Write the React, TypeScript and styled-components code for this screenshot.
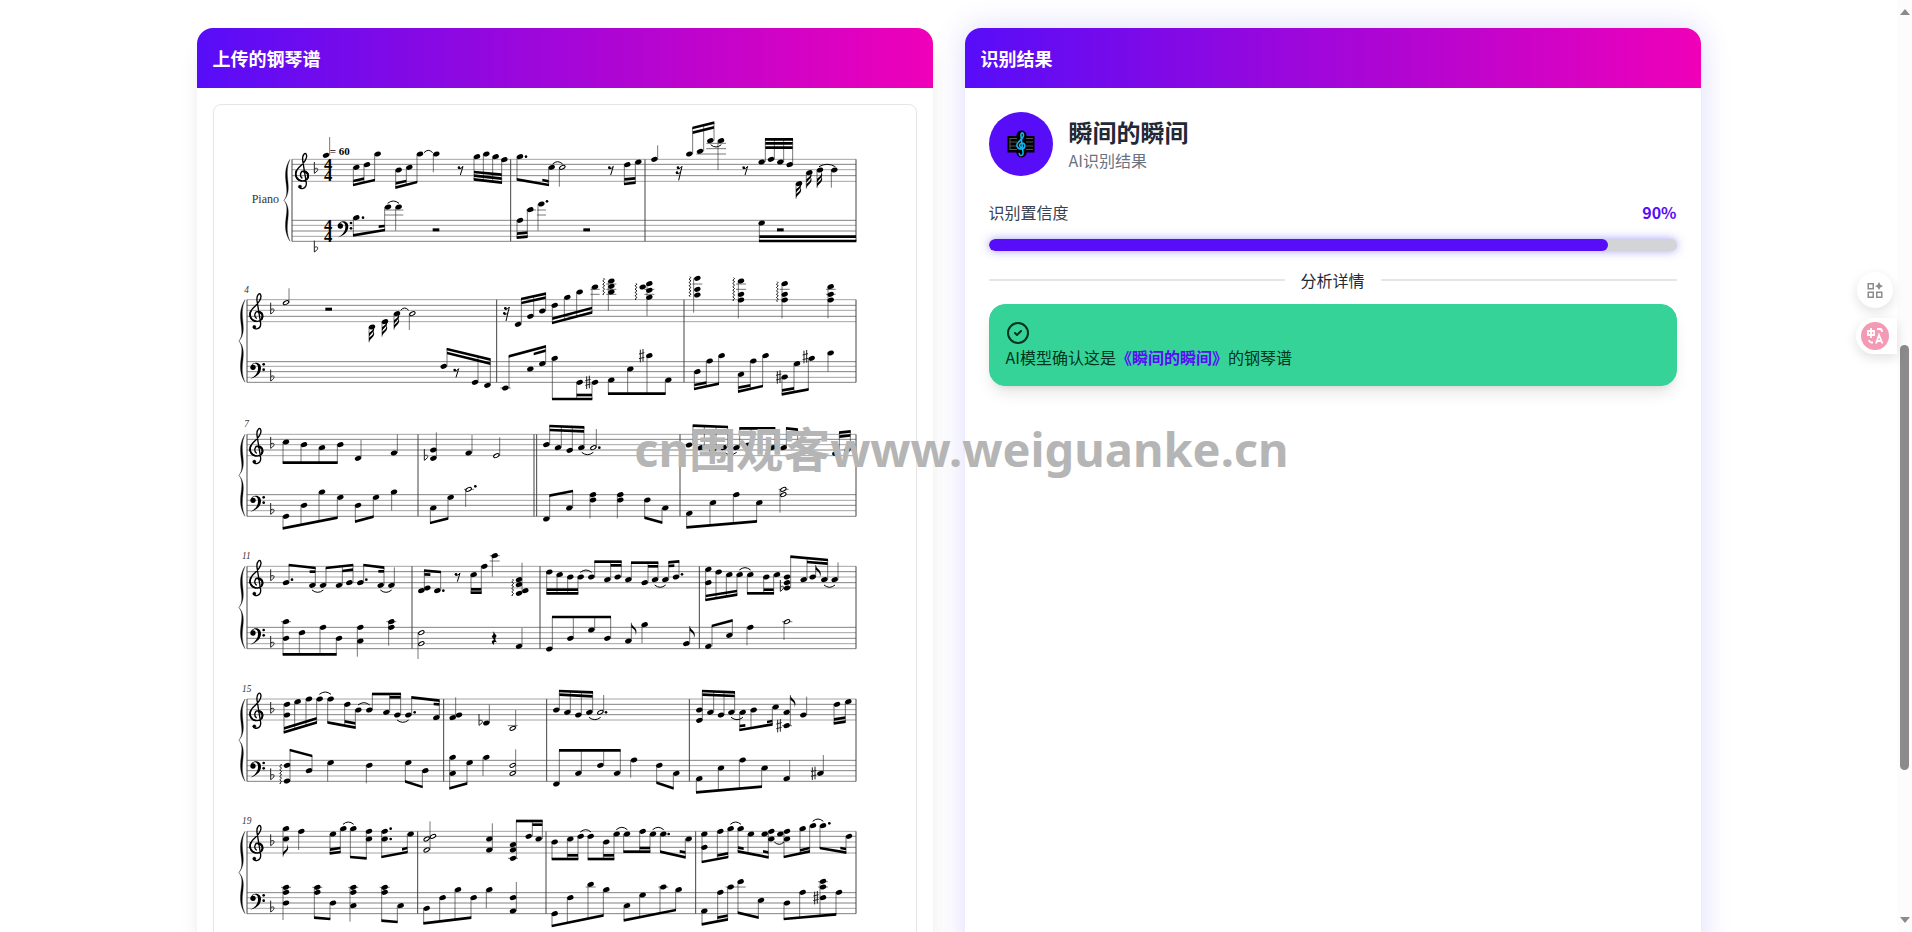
import React from 'react';
import styled, { createGlobalStyle } from 'styled-components';
import { CircleCheck } from 'lucide-react';

/* ---------- score data ---------- */

interface Group {
  stems: string; // "x,headY x,headY ..."
  from: number;
  to: number;
}

interface System {
  offset: number;
  left: number;
  number: string;
  numberY: number;
  treble: number[];
  bass: number[];
  barlines: number[];
  heads: string;
  halves: string;
  stems: string; // "x,y1,y2"
  groups: Group[];
  beams: string; // "x1,y1,x2,y2"
  dots: string;
  ties: string; // "x1,x2,y,direction"
  eighthRests?: string;
  sixteenthRests?: string;
  halfRests?: string;
  quarterRests?: string;
  sharps?: string;
  flats?: string;
  arpeggios?: string; // "x,y1,y2"
  flags?: string; // "x,y,direction"
  ledgers?: string; // "x1,x2,y"
}

const g = (stems: string, from: number, to: number): Group => ({ stems, from, to });

const SYSTEMS: System[] = [
  {
    offset: -285,
    left: 215,
    number: '',
    numberY: 0,
    treble: [448, 463, 479, 497, 514],
    bass: [631, 646, 663, 679, 694],
    barlines: [871, 1274],
    heads:
      '317,436 408,472 440,464 472,432 535,480 567,472 599,432 648,432 770,440 798,432 826,440 852,449 899,440 994,472 1221,464 1254,456 1302,448 1407,432 1439,424 1470,392 1502,392 1624,456 1652,448 1680,456 1708,464 1736,521 1767,488 1799,480 1842,480 408,623 503,591 535,591 899,631 930,599 963,582 1624,639',
    halves: '1026,472',
    stems:
      '328,381,436 639,432,487 1017,472,530 1312,406,448 1493,392,480 1727,521,566 1758,488,536 1790,480,534 1833,480,533 526,591,662 953,582,662',
    groups: [
      g('399,472 431,464 463,432', 525, 510),
      g('526,480 558,472 590,432', 533, 516),
      g('761,440 789,432 817,440 844,449', 508, 518),
      g('890,440 985,472', 508, 525),
      g('1212,464 1245,456', 522, 518),
      g('1417,432 1450,424 1481,392', 354, 338),
      g('1635,456 1662,448 1690,456 1717,464', 388, 388),
      g('399,623 493,591', 676, 660),
      g('890,631 921,599', 683, 680),
      g('1617,639 1907,693', 693, 693),
    ],
    beams:
      '399,513,431,506 526,520,558,513 761,497,844,506 761,486,844,494 966,510,985,514 1212,508,1245,505 1417,368,1481,352 1635,400,1717,400 1635,413,1717,413 475,650,493,648 890,671,921,668 1617,680,1907,680',
    dots: '428,623 917,440 980,574',
    ties: '612,636,428,-1 998,1026,462,-1 503,535,580,-1 1472,1502,404,1 1797,1844,470,-1',
    eighthRests: '720,480 1171,480 1574,480',
    sixteenthRests: '1375,488',
    halfRests: '647,659 1099,659 1680,659',
    flags: '1727,566,-1 1727,552,-1 1758,536,-1 1758,522,-1 1790,534,-1 1790,520,-1',
    ledgers: '493,549,600 493,549,615 1458,1517,400 1458,1517,416 1428,1517,432 918,947,600 950,977,600 950,977,615',
  },
  {
    offset: 480,
    left: 80,
    number: '4',
    numberY: 84,
    treble: [104, 121, 136, 154, 170],
    bass: [290, 304, 320, 337, 352],
    barlines: [829, 1391],
    heads:
      '455,186 494,170 530,146 893,178 930,154 966,138 1003,121 1041,97 1078,81 1124,66 1173,48 1173,64 1173,81 1267,66 1287,56 1287,76 1287,97 1431,40 1431,73 1431,90 1562,48 1562,88 1562,105 1693,56 1693,88 1693,105 1831,65 1831,88 1831,105 670,304 764,352 801,361 855,369 930,312 966,296 1003,280 1078,352 1124,352 1173,345 1230,312 1287,272 1344,345 1431,320 1468,288 1504,272 1562,328 1599,288 1636,272 1693,336 1730,296 1774,280 1831,264',
    halves: '197,113 576,146',
    stems:
      '206,70,113 446,186,232 485,170,215 521,146,194 567,146,195 1164,48,137 1280,56,153 1420,40,143 1554,48,160 1685,56,160 1823,65,160 1823,264,320',
    groups: [
      g('903,178 940,154 976,138', 102, 86),
      g('996,121 1032,97 1069,81 1115,66', 174, 142),
      g('680,304 773,352 810,361', 252, 284),
      g('866,369 976,296', 274, 244),
      g('996,280 1069,352 1115,352', 402, 402),
      g('1164,345 1222,312 1280,272 1335,345', 386, 386),
      g('1422,320 1458,288 1495,272', 372, 356),
      g('1554,328 1590,288 1627,272', 380, 363),
      g('1685,336 1721,296 1764,280', 388, 373),
    ],
    beams:
      '903,114,976,98 996,161,1115,129 680,264,810,296 940,267,976,257 1069,390,1115,390 1422,360,1458,353 1554,368,1590,361 1685,376,1721,370',
    dots: '',
    ties: '542,564,136,-1',
    eighthRests: '707,322',
    sixteenthRests: '857,145',
    halfRests: '325,132',
    sharps: '1264,272 1103,352 1675,336 1755,275',
    arpeggios: '1150,40,88 1247,55,105 1409,35,97 1540,38,112 1671,50,112',
    flags: '446,232,-1 446,218,-1 485,215,-1 485,201,-1 521,194,-1 521,180,-1',
    ledgers:
      '1110,1138,73 1110,1138,88 1158,1188,57 1158,1188,73 1158,1188,88 1272,1302,73 1272,1302,88 1416,1446,57 1547,1577,57 1547,1577,73 1678,1708,73 1817,1846,73 1817,1846,88 840,871,369',
  },
  {
    offset: 480,
    left: 80,
    number: '7',
    numberY: 485,
    treble: [508, 523, 539, 555, 572],
    bass: [689, 706, 721, 737, 754],
    barlines: [593, 941, 949, 1379],
    heads:
      '197,531 251,539 305,548 360,539 413,580 521,564 639,555 639,580 745,564 978,539 1013,548 1048,556 1083,548 1406,540 1441,548 1477,556 1510,548 1548,548 1582,540 1656,548 1690,548 1845,565 1881,555 197,754 251,721 305,681 360,697 413,721 467,697 521,681 639,729 691,697 978,762 1047,729 1118,689 1118,705 1200,689 1200,705 1281,705 1335,729 1407,745 1478,713 1548,689 1617,713',
    halves: '828,572 1119,548 745,673 1689,673 1689,689',
    stems:
      '422,525,580 531,508,564 648,502,580 755,510,564 838,517,572 1128,492,548 514,681,737 736,673,726 1109,689,760 1191,689,760 1679,673,743',
    groups: [
      g('188,531 242,539 296,548 351,539', 593, 593),
      g('988,539 1023,548 1056,556 1091,548', 483, 487),
      g('1418,540 1452,548 1487,556 1522,548', 482, 486),
      g('1558,548 1592,540 1664,548', 490, 490),
      g('1698,548 1732,548', 490, 494),
      g('1857,565 1890,555', 503, 499),
      g('188,754 242,721 296,681 351,697', 790, 758),
      g('405,721 459,697', 770, 755),
      g('630,729 683,697', 774, 760),
      g('988,762 1057,729', 692, 678),
      g('1273,705 1325,729', 758, 773),
      g('1399,745 1469,713 1539,689 1609,713', 787, 769),
    ],
    beams: '988,495,1091,499 1857,515,1890,511',
    dots: '765,664 1137,548',
    ties: '1085,1118,562,1 1512,1548,562,1',
    flats: '612,568',
    ledgers: '731,761,673 1675,1705,673',
  },
  {
    offset: 1305,
    left: 80,
    number: '11',
    numberY: 57,
    treble: [79, 95, 111, 128, 144],
    bass: [262, 278, 295, 311, 326],
    barlines: [575, 959, 1437],
    heads:
      '197,128 276,136 308,136 356,136 387,128 420,128 481,136 513,136 603,152 621,144 651,152 760,104 792,79 823,47 896,119 896,134 896,160 915,152 987,96 1018,104 1050,111 1081,111 1113,111 1161,119 1192,111 1224,119 1273,128 1304,119 1335,119 1367,111 1464,88 1464,128 1495,96 1527,104 1558,104 1590,104 1638,111 1670,104 1700,111 1700,128 1700,144 1750,119 1777,111 1812,119 1843,119 197,245 197,295 245,278 308,262 356,295 420,262 420,303 513,245 513,262 896,319 987,327 1050,295 1113,270 1161,295 1224,303 1273,254 1398,311 1464,319 1527,286 1590,262',
    halves: '603,278 603,311 1700,245',
    stems:
      '522,82,136 816,47,110 905,68,160 1786,75,111 1853,67,119 411,262,350 505,245,317 593,278,357 905,264,319 1233,248,303 1265,254,310 1408,258,311 1580,262,316 1691,245,300',
    groups: [
      g('206,128 285,136', 75, 84),
      g('317,136 366,136 398,128', 84, 75),
      g('430,128 491,136', 75, 83),
      g('612,152 661,152', 92, 96),
      g('752,104 783,79', 158, 158),
      g('979,96 1010,104 1042,111 1073,111', 160, 160),
      g('1123,111 1171,119 1203,111', 65, 65),
      g('1233,119 1283,128 1313,119', 68, 68),
      g('1345,119 1376,111', 67, 64),
      g('1456,88 1487,96 1518,104 1550,104', 180, 164),
      g('1581,104 1630,111 1660,104', 160, 160),
      g('1711,144 1760,119 1822,119', 50, 60),
      g('188,245 237,278 299,262 348,295', 343, 343),
      g('996,327 1059,295 1123,270 1171,295', 231, 231),
      g('1475,319 1536,286', 258, 241),
    ],
    beams:
      '268,95,285,95 366,93,398,89 474,94,491,94 612,103,630,104 752,148,783,148 979,149,1073,149 1171,76,1203,76 1283,79,1313,79 1345,78,1362,77 1456,168,1550,153 1630,149,1660,149 1760,66,1822,71',
    dots: '215,119 438,119 669,152 1385,103',
    ties: '276,308,150,1 481,513,150,1 1081,1113,97,-1 1304,1335,135,1 1558,1590,90,-1 1812,1843,135,1',
    eighthRests: '711,110',
    quarterRests: '822,294',
    flats: '1680,136',
    arpeggios: '877,118,165',
    flags: '1233,248,1 1408,258,1 1786,75,1',
    ledgers: '182,212,245 498,528,245 808,838,47 808,838,63 1685,1716,245',
  },
  {
    offset: 1305,
    left: 80,
    number: '15',
    numberY: 455,
    treble: [477, 493, 509, 524, 540],
    bass: [661, 677, 692, 708, 724],
    barlines: [670, 979, 1407],
    heads:
      '200,493 200,525 232,485 266,477 298,477 331,477 381,493 414,510 447,510 498,517 531,525 564,525 648,533 697,533 716,525 798,549 1008,510 1041,517 1074,525 1107,517 1437,510 1437,541 1470,517 1502,525 1533,517 1567,517 1600,510 1666,501 1699,517 1699,557 1749,525 1850,493 1884,485 200,676 200,723 266,692 331,668 447,676 564,668 615,692 697,652 697,700 748,668 798,652 1008,732 1074,700 1140,676 1190,700 1241,660 1317,676 1368,700 1437,716 1502,684 1567,660 1633,684 1699,716 1800,700',
    halves: '877,565 1140,517 877,676 877,700',
    stems:
      '706,472,533 807,494,549 886,510,565 1150,465,517 1710,465,557 1759,470,525 322,668,724 438,676,730 788,652,708 886,628,700 1231,660,713 1708,660,716 1809,645,700',
    groups: [
      g('191,493 223,485 257,477 289,477', 577, 547),
      g('322,477 373,493 405,510', 547, 563),
      g('456,510 508,517 541,525', 462, 462),
      g('574,525 657,533', 472, 482),
      g('1017,510 1050,517 1083,525 1117,517', 453, 457),
      g('1446,541 1480,517 1511,525 1543,517', 453, 457),
      g('1558,517 1592,510 1656,501', 570, 553),
      g('1841,493 1875,485', 550, 545),
      g('209,723 275,692', 630, 648),
      g('555,668 606,692', 724, 741),
      g('688,652 740,668', 745, 730),
      g('1017,732 1083,700 1150,676 1200,700', 631, 631),
      g('1309,676 1359,700', 728, 745),
      g('1428,716 1494,684 1557,660 1624,684', 757, 740),
    ],
    beams:
      '191,565,289,535 373,544,405,550 508,472,541,472 640,492,657,493 1017,464,1117,469 1446,464,1543,468 1558,558,1575,556 1640,546,1656,543 1841,538,1875,533',
    dots: '583,517 1157,517',
    ties: '298,331,463,-1 414,447,495,-1 531,564,540,1 1107,1140,532,1 1533,1567,532,1',
    sharps: '1676,557 1780,700',
    flats: '776,538',
    arpeggios: '181,672,730',
    flags: '1710,465,1',
    ledgers: '1685,1715,557 862,892,557',
  },
  {
    offset: 2055,
    left: 80,
    number: '19',
    numberY: 102,
    treble: [124, 139, 156, 172, 189],
    bass: [308, 323, 339, 355, 371],
    barlines: [592, 977, 1426],
    heads:
      '197,116 197,147 243,124 338,132 369,116 399,116 446,124 446,147 493,124 493,147 571,132 807,147 807,180 878,164 878,180 878,205 925,139 955,147 1003,156 1050,147 1081,139 1111,139 1158,156 1189,132 1220,132 1267,124 1298,132 1329,132 1405,147 1452,132 1452,172 1500,124 1531,116 1561,116 1592,132 1633,132 1653,124 1653,147 1680,132 1700,124 1700,147 1747,116 1778,107 1808,107 1886,139 197,292 197,307 197,339 291,292 291,307 338,339 399,292 399,307 399,347 493,292 493,307 541,347 619,355 667,323 713,299 760,323 807,299 878,323 878,363 1003,371 1050,323 1111,283 1158,299 1220,347 1267,315 1329,291 1375,299 1452,363 1500,307 1531,291 1561,275 1622,331 1700,339 1747,307 1808,274 1808,291 1808,323 1856,307',
    halves: '619,147 619,180 638,139',
    stems:
      '188,116,200 235,124,180 629,94,180 816,100,180 188,292,390 389,292,395 798,299,355 888,276,363',
    groups: [
      g('329,132 360,116', 190, 186),
      g('390,116 438,124', 201, 205),
      g('484,124 561,132', 201, 186),
      g('888,205 936,139 966,147', 93, 93),
      g('995,156 1041,147 1073,139', 207, 207),
      g('1103,139 1149,156 1181,132', 207, 207),
      g('1210,132 1258,124 1289,132', 185, 185),
      g('1320,132 1395,147', 185, 202),
      g('1445,132 1491,124 1523,116', 216, 201),
      g('1553,116 1583,132 1644,124', 184, 202),
      g('1691,124 1739,116 1768,107', 201, 184),
      g('1799,107 1877,139', 174, 188),
      g('282,292 329,339', 383, 387),
      g('484,292 531,347', 392, 396),
      g('610,355 658,323 704,299 752,323', 400, 383),
      g('995,371 1041,323 1103,283 1149,299', 408, 376),
      g('1211,347 1258,315 1319,291 1366,299', 391, 360),
      g('1445,363 1492,307 1522,291', 403, 388),
      g('1553,275 1614,331', 368, 383),
      g('1691,339 1738,307 1799,274 1847,307', 387, 373),
    ],
    beams:
      '329,179,360,174 545,178,561,174 936,104,966,104 1041,196,1073,196 1149,196,1181,196 1258,174,1289,174 1378,184,1395,187 1491,196,1523,190 1553,173,1570,176 1628,184,1644,187 1739,181,1768,174 1860,174,1877,177 1491,383,1522,377',
    dots: '511,116 511,147 1345,132 1827,100',
    ties: '369,399,103,-1 1081,1111,126,-1 1189,1220,119,-1 1298,1329,119,-1 1531,1561,103,-1 1778,1808,94,-1 1663,1690,156,1',
    sharps: '1787,323',
    flags: '188,200,-1',
    ledgers: '182,212,292 276,306,292 384,414,292 478,508,292 863,893,205 1096,1126,291 1314,1344,291 1516,1546,291 1546,1576,291 1793,1823,275 1793,1823,291',
  },
];

const parse = (list = ''): number[][] =>
  list.trim() === '' ? [] : list.trim().split(/\s+/).map((item) => item.split(',').map(Number));

const TrebleClef = ({ x, y }: { x: number; y: number }) => (
  <g transform={`translate(${x} ${y})`} fill="none" stroke="#000">
    <path strokeWidth="4" d="M21 76C12 70 14 54 26 54C44 55 44 82 23 84C1 84 -5 63 7 48C17 36 34 26 34 9C32 -7 20 4 22 22L33 90C34 108 14 111 11 101" />
    <path strokeWidth="5" d="M4 52C-3 66 4 82 20 84" />
    <path strokeWidth="6" d="M24 56C38 56 42 68 35 78" />
    <circle cx="14" cy="101" r="5" fill="#000" />
  </g>
);

const BassClef = ({ x, y }: { x: number; y: number }) => (
  <g transform={`translate(${x} ${y})`}>
    <path d="M4 12C7 -1 33 -3 34 17C34 35 20 45 2 51C18 41 26 32 25 16C24 2 11 2 8 9Z" />
    <circle cx="10" cy="16" r="8" />
    <circle cx="42" cy="7" r="4" />
    <circle cx="42" cy="23" r="4" />
  </g>
);

const Flat = ({ x, y }: { x: number; y: number }) => (
  <path fill="none" stroke="#222" strokeWidth="3" transform={`translate(${x} ${y})`} d="M0 -20V14C14 6 13 -5 1 0" />
);

const SystemDrawing = ({ s }: { s: System }) => {
  const top = s.treble[0];
  const bottom = s.bass[4];
  const mid = (top + bottom) / 2;
  const first = s.number === '';
  const clefX = s.left + (first ? 10 : 8);
  const flatX = s.left + (first ? 67 : 71);
  const braceX = s.left - 6;
  return (
    <g transform={`translate(0 ${s.offset})`}>
      {[...s.treble, ...s.bass].map((y, i) => (
        <path key={y} d={`M${s.left} ${y}H1907`} stroke={i % 2 ? '#444' : '#777'} strokeWidth="2" />
      ))}
      {[s.left, ...s.barlines, 1907].map((x) => (
        <path key={x} d={`M${x} ${top}V${bottom}`} stroke="#444" strokeWidth="3" />
      ))}
      <path
        d={`M${braceX} ${top}C${braceX - 32} ${top + 50} ${braceX + 6} ${mid - 30} ${braceX - 18} ${mid}C${braceX + 6} ${mid + 30} ${braceX - 32} ${bottom - 50} ${braceX} ${bottom}C${braceX - 22} ${bottom - 50} ${braceX + 12} ${mid + 34} ${braceX - 18} ${mid}C${braceX + 12} ${mid - 34} ${braceX - 22} ${top + 50} ${braceX} ${top}Z`}
        stroke="#222"
        strokeWidth="1"
      />
      <TrebleClef x={clefX} y={top - 19} />
      <BassClef x={first ? 350 : clefX} y={s.bass[0] + 1} />
      <Flat x={flatX} y={s.treble[2] - 3} />
      <Flat x={flatX} y={first ? 712 : s.bass[3] - 3} />
      {first ? (
        <>
          <text x="94" y="580" fontSize="36" fill="#333">Piano</text>
          <text x="328" y="434" fontSize="33" fontWeight="700">= 60</text>
          {[480, 662].map((y) => (
            <text key={y} x="311" y={y} fontSize="50" fontWeight="700">
              <tspan>4</tspan>
              <tspan x="311" dy="33">4</tspan>
            </text>
          ))}
        </>
      ) : (
        <text x={s.number.length > 1 ? 65 : 72} y={s.numberY} fontSize="28" fontStyle="italic" fill="#333">{s.number}</text>
      )}
      {parse(s.ledgers).map(([a, b, y], i) => (
        <path key={i} d={`M${a} ${y}H${b}`} stroke="#333" strokeWidth="2" />
      ))}
      {parse(s.stems).map(([x, a, b], i) => (
        <path key={i} d={`M${x} ${a}V${b}`} stroke="#333" strokeWidth="2" />
      ))}
      {s.groups.map((group, i) => {
        const stems = parse(group.stems);
        const x1 = stems[0][0];
        const x2 = stems[stems.length - 1][0];
        return (
          <g key={i}>
            {stems.map(([x, y]) => (
              <path
                key={x}
                d={`M${x} ${y}V${group.from + ((group.to - group.from) * (x - x1)) / (x2 - x1)}`}
                stroke="#333"
                strokeWidth="2"
              />
            ))}
            <path d={`M${x1 - 1} ${group.from - 4}L${x2 + 1} ${group.to - 4}V${group.to + 4}L${x1 - 1} ${group.from + 4}Z`} />
          </g>
        );
      })}
      {parse(s.beams).map(([x1, y1, x2, y2], i) => (
        <path key={i} d={`M${x1} ${y1 - 4}L${x2} ${y2 - 4}V${y2 + 4}L${x1} ${y1 + 4}Z`} />
      ))}
      {parse(s.heads).map(([x, y], i) => (
        <ellipse key={i} rx="10" ry="7" transform={`translate(${x} ${y}) rotate(-22)`} />
      ))}
      {parse(s.halves).map(([x, y], i) => (
        <ellipse key={i} rx="9" ry="5" fill="#fff" stroke="#000" strokeWidth="3" transform={`translate(${x} ${y}) rotate(-28)`} />
      ))}
      {parse(s.dots).map(([x, y], i) => (
        <circle key={i} cx={x} cy={y} r="4" />
      ))}
      {parse(s.ties).map(([a, b, y, d], i) => (
        <path key={i} fill="none" stroke="#000" strokeWidth="3" d={`M${a - 1} ${y}Q${(a + b) / 2} ${y + 14 * d} ${b + 1} ${y}`} />
      ))}
      {parse(s.eighthRests).map(([x, y], i) => (
        <g key={i} transform={`translate(${x} ${y})`}>
          <circle cx="-4" cy="-7" r="4" />
          <path fill="none" stroke="#000" strokeWidth="3" d="M-5 -4Q2 -2 8 -11L0 15" />
        </g>
      ))}
      {parse(s.sixteenthRests).map(([x, y], i) => (
        <g key={i} transform={`translate(${x} ${y})`}>
          <circle cx="-2" cy="-15" r="4" />
          <circle cx="-5" cy="0" r="4" />
          <path fill="none" stroke="#000" strokeWidth="3" d="M-3 -12Q4 -10 10 -19L0 23M-6 3Q1 5 6 -2" />
        </g>
      ))}
      {parse(s.halfRests).map(([x, y], i) => (
        <rect key={i} x={x - 10} y={y - 4} width="20" height="9" />
      ))}
      {parse(s.quarterRests).map(([x, y], i) => (
        <path key={i} transform={`translate(${x} ${y})`} d="M-5 -22L7 -6Q-2 3 8 13Q-5 8 0 22Q-15 10 -1 6L-8 -5Q1 -12 -5 -22Z" />
      ))}
      {parse(s.sharps).map(([x, y], i) => (
        <path key={i} fill="none" stroke="#222" strokeWidth="3" transform={`translate(${x} ${y})`} d="M-4 -18V20M4 -20V18M-8 -5L8 -9M-8 9L8 5" />
      ))}
      {parse(s.flats).map(([x, y], i) => (
        <Flat key={i} x={x} y={y + 4} />
      ))}
      {parse(s.arpeggios).map(([x, a, b], i) => (
        <path
          key={i}
          fill="none"
          stroke="#000"
          strokeWidth="3"
          d={`M${x} ${a}${'q5 3 0 5t0 5'.repeat(Math.round((b - a) / 10))}`}
        />
      ))}
      {parse(s.flags).map(([x, y, d], i) => (
        <path key={i} transform={`translate(${x} ${y}) scale(1 ${d})`} d="M0 0C2 14 24 16 12 38C16 24 8 20 0 14Z" />
      ))}
    </g>
  );
};

const SheetMusic = () => (
  <Sheet viewBox="-19 0 2106 2979" role="img" aria-label="钢琴谱">
    {SYSTEMS.map((s) => (
      <SystemDrawing key={`${s.offset}-${s.number}`} s={s} />
    ))}
  </Sheet>
);

/* ---------- styles ---------- */

const GlobalStyle = createGlobalStyle`
  * { box-sizing: border-box; }
  body {
    margin: 0;
    background: #fff;
    color: #1f2937;
    font: 16px/24px "Noto Sans CJK SC", "Noto Sans", sans-serif;
  }
  h1, h2, p { margin: 0; }
`;

const Viewport = styled.div`
  position: relative;
  display: flex;
  height: 100vh;
  overflow: hidden;
`;

const Main = styled.main`
  flex: 1;
  min-width: 0;
  padding: 28px 16px;
  overflow: hidden;
`;

const Columns = styled.div`
  display: grid;
  grid-template-columns: 1fr 1fr;
  gap: 32px;
  max-width: 1504px;
  margin: 0 auto;
`;

const Card = styled.section<{ $glow?: boolean }>`
  border-radius: 16px;
  background: #fff;
  box-shadow: ${(p) =>
    p.$glow
      ? '0 0 30px rgba(79, 70, 229, 0.2)'
      : '0 20px 25px -5px rgba(0, 0, 0, 0.1), 0 8px 10px -6px rgba(0, 0, 0, 0.1)'};
`;

const CardHeader = styled.header`
  padding: 16px;
  border-radius: 16px 16px 0 0;
  background: linear-gradient(90deg, #570df8, #f000b8);
`;

const CardTitle = styled.h2`
  color: #fff;
  font-size: 18px;
  line-height: 28px;
  font-weight: 700;
`;

const SheetBody = styled.div`
  padding: 16px;
`;

const SheetFrame = styled.div`
  overflow: hidden;
  border: 1px solid #e5e6e6;
  border-radius: 8px;
`;

const Sheet = styled.svg`
  display: block;
  width: 100%;
  font-family: "Liberation Serif", serif;
`;

const ResultBody = styled.div`
  padding: 24px;
`;

const Song = styled.div`
  display: flex;
  align-items: center;
  gap: 16px;
  margin-bottom: 24px;
`;

const Avatar = styled.div`
  display: grid;
  place-items: center;
  width: 64px;
  height: 64px;
  border-radius: 50%;
  background: #570df8;
`;

const SongName = styled.h1`
  font-size: 24px;
  line-height: 32px;
  font-weight: 700;
`;

const SongNote = styled.p`
  color: #6b7280;
`;

const ConfidenceRow = styled.div`
  display: flex;
  justify-content: space-between;
  margin-bottom: 15px;
  color: #374151;
`;

const Percent = styled.strong`
  color: #570df8;
  font-weight: 700;
`;

const Progress = styled.progress`
  display: block;
  width: 100%;
  height: 12px;
  border: 0;
  border-radius: 8px;
  overflow: hidden;
  appearance: none;
  background: #d2d4d7;
  box-shadow: 0 0 10px rgba(79, 70, 229, 0.5);

  &::-webkit-progress-bar {
    background: #d2d4d7;
    border-radius: 8px;
  }
  &::-webkit-progress-value {
    background: #570df8;
    border-radius: 8px;
  }
`;

const Divider = styled.div`
  display: flex;
  align-items: center;
  gap: 16px;
  margin: 17px 0 12px;

  &::before,
  &::after {
    content: '';
    flex: 1;
    height: 2px;
    background: #e5e6e6;
  }
`;

const Alert = styled.div`
  padding: 16px;
  border: 1px solid #36d399;
  border-radius: 16px;
  background: #36d399;
  color: #003320;
  box-shadow: 0 10px 15px -3px rgba(0, 0, 0, 0.1), 0 4px 6px -4px rgba(0, 0, 0, 0.1);

  svg {
    display: block;
  }
`;

const Highlight = styled.strong`
  color: #570df8;
  font-weight: 700;
`;

const Watermark = styled.div`
  position: absolute;
  top: 417px;
  left: 0;
  right: 0;
  padding-left: 11px;
  color: #b5b5b5;
  font: 700 47px/64px "Noto Sans", "Noto Sans CJK SC", sans-serif;
  text-align: center;
  white-space: nowrap;
  pointer-events: none;
`;

const FloatingTools = styled.div`
  position: absolute;
  top: 272px;
  right: 15px;
  display: flex;
  flex-direction: column;
  align-items: flex-end;
  gap: 10px;
`;

const ToolButton = styled.button<{ $docked?: boolean }>`
  display: flex;
  align-items: center;
  justify-content: ${(p) => (p.$docked ? 'flex-start' : 'center')};
  width: ${(p) => (p.$docked ? 41 : 36)}px;
  height: 36px;
  margin-right: ${(p) => (p.$docked ? 0 : 4)}px;
  padding: 0 ${(p) => (p.$docked ? 5 : 0)}px;
  border: 0;
  border-radius: ${(p) => (p.$docked ? '18px 0 0 18px' : '18px')};
  background: #fff;
  box-shadow: 0 4px 12px rgba(0, 0, 0, 0.12);
`;

const ScrollTrack = styled.div`
  display: flex;
  flex-direction: column;
  align-items: center;
  width: 15px;
  padding: 6px 0;
  background: #fcfcfc;
`;

const ScrollSpace = styled.div<{ $grow: number }>`
  flex: ${(p) => p.$grow};
`;

const ScrollThumb = styled.div`
  flex: 427;
  width: 9px;
  border-radius: 5px;
  background: #8b8b8b;
`;

/* ---------- icons ---------- */

const ScoreIcon = () => (
  <svg width="28" height="28" viewBox="0 0 28 28" aria-hidden="true">
    <rect x="0.5" y="6" width="27" height="16.500" fill="#000" />
    <rect x="9.500" y="0.500" width="10" height="27" rx="5" fill="#000" />
    <path d="M2.500 8.500H26M2.500 12H26M2.500 16H26M2.500 19.500H26M3 8V20" stroke="#555" fill="none" />
    <rect x="10" y="5" width="9" height="18" rx="3" fill="#000" />
    <path
      d="M14 17.500C11.500 16 13 12.500 15.500 13C19 14 18.500 19 14.500 19C10 19 8.500 15 11.500 12C14 9.500 17 7.500 16.500 4.500C16 1.500 13.500 3 14 6L16 22.500C16.500 26 12.500 26.500 12.200 23.500"
      fill="none"
      stroke="#12b5ea"
      strokeWidth="1.600"
      strokeLinecap="round"
    />
  </svg>
);

const GridPlusIcon = () => (
  <svg width="16" height="16" viewBox="0 0 16 16" fill="none" stroke="#8c8c8c" strokeWidth="1.500" aria-hidden="true">
    <path d="M1.250 1.750H6.250V6.750H1.250ZM1.250 10.250H6.250V15.250H1.250ZM9.750 10.250H14.750V15.250H9.750Z" />
    <path fill="#8c8c8c" stroke="none" d="M12 0Q12.800 3.200 16 4Q12.800 4.800 12 8Q11.200 4.800 8 4Q11.200 3.200 12 0Z" />
  </svg>
);

const TranslateIcon = () => (
  <svg width="28" height="28" viewBox="0 0 28 28" aria-hidden="true">
    <circle cx="14" cy="14" r="14" fill="#f49ab4" />
    <path
      d="M7 9H13V13H7ZM10 6V16M16 7H19Q21 7 21 10M8 18Q8 20 10 20.500H12M15 21.500L18 13L21.500 21.500M16 19H20.500"
      fill="none"
      stroke="#fff"
      strokeWidth="1.800"
    />
  </svg>
);

const Arrow = ({ down }: { down?: boolean }) => (
  <svg width="10" height="12" viewBox="0 0 10 12" aria-hidden="true">
    <path d={down ? 'M0 3H10L5 9Z' : 'M0 9H10L5 3Z'} fill="#8b8b8b" />
  </svg>
);

/* ---------- page ---------- */

export default function App() {
  return (
    <>
      <GlobalStyle />
      <Viewport>
        <Main>
          <Columns>
            <Card>
              <CardHeader>
                <CardTitle>上传的钢琴谱</CardTitle>
              </CardHeader>
              <SheetBody>
                <SheetFrame>
                  <SheetMusic />
                </SheetFrame>
              </SheetBody>
            </Card>
            <Card $glow>
              <CardHeader>
                <CardTitle>识别结果</CardTitle>
              </CardHeader>
              <ResultBody>
                <Song>
                  <Avatar>
                    <ScoreIcon />
                  </Avatar>
                  <div>
                    <SongName>瞬间的瞬间</SongName>
                    <SongNote>AI识别结果</SongNote>
                  </div>
                </Song>
                <ConfidenceRow>
                  <label htmlFor="confidence">识别置信度</label>
                  <Percent>90%</Percent>
                </ConfidenceRow>
                <Progress id="confidence" value={90} max={100} />
                <Divider>分析详情</Divider>
                <Alert role="status">
                  <CircleCheck size={24} strokeWidth={2} />
                  <p>
                    AI模型确认这是<Highlight>《瞬间的瞬间》</Highlight>的钢琴谱
                  </p>
                </Alert>
              </ResultBody>
            </Card>
          </Columns>
        </Main>
        <ScrollTrack aria-hidden="true">
          <Arrow />
          <ScrollSpace $grow={328} />
          <ScrollThumb />
          <ScrollSpace $grow={145} />
          <Arrow down />
        </ScrollTrack>
        <FloatingTools>
          <ToolButton type="button" aria-label="更多工具">
            <GridPlusIcon />
          </ToolButton>
          <ToolButton type="button" aria-label="翻译" $docked>
            <TranslateIcon />
          </ToolButton>
        </FloatingTools>
        <Watermark>cn围观客www.weiguanke.cn</Watermark>
      </Viewport>
    </>
  );
}
